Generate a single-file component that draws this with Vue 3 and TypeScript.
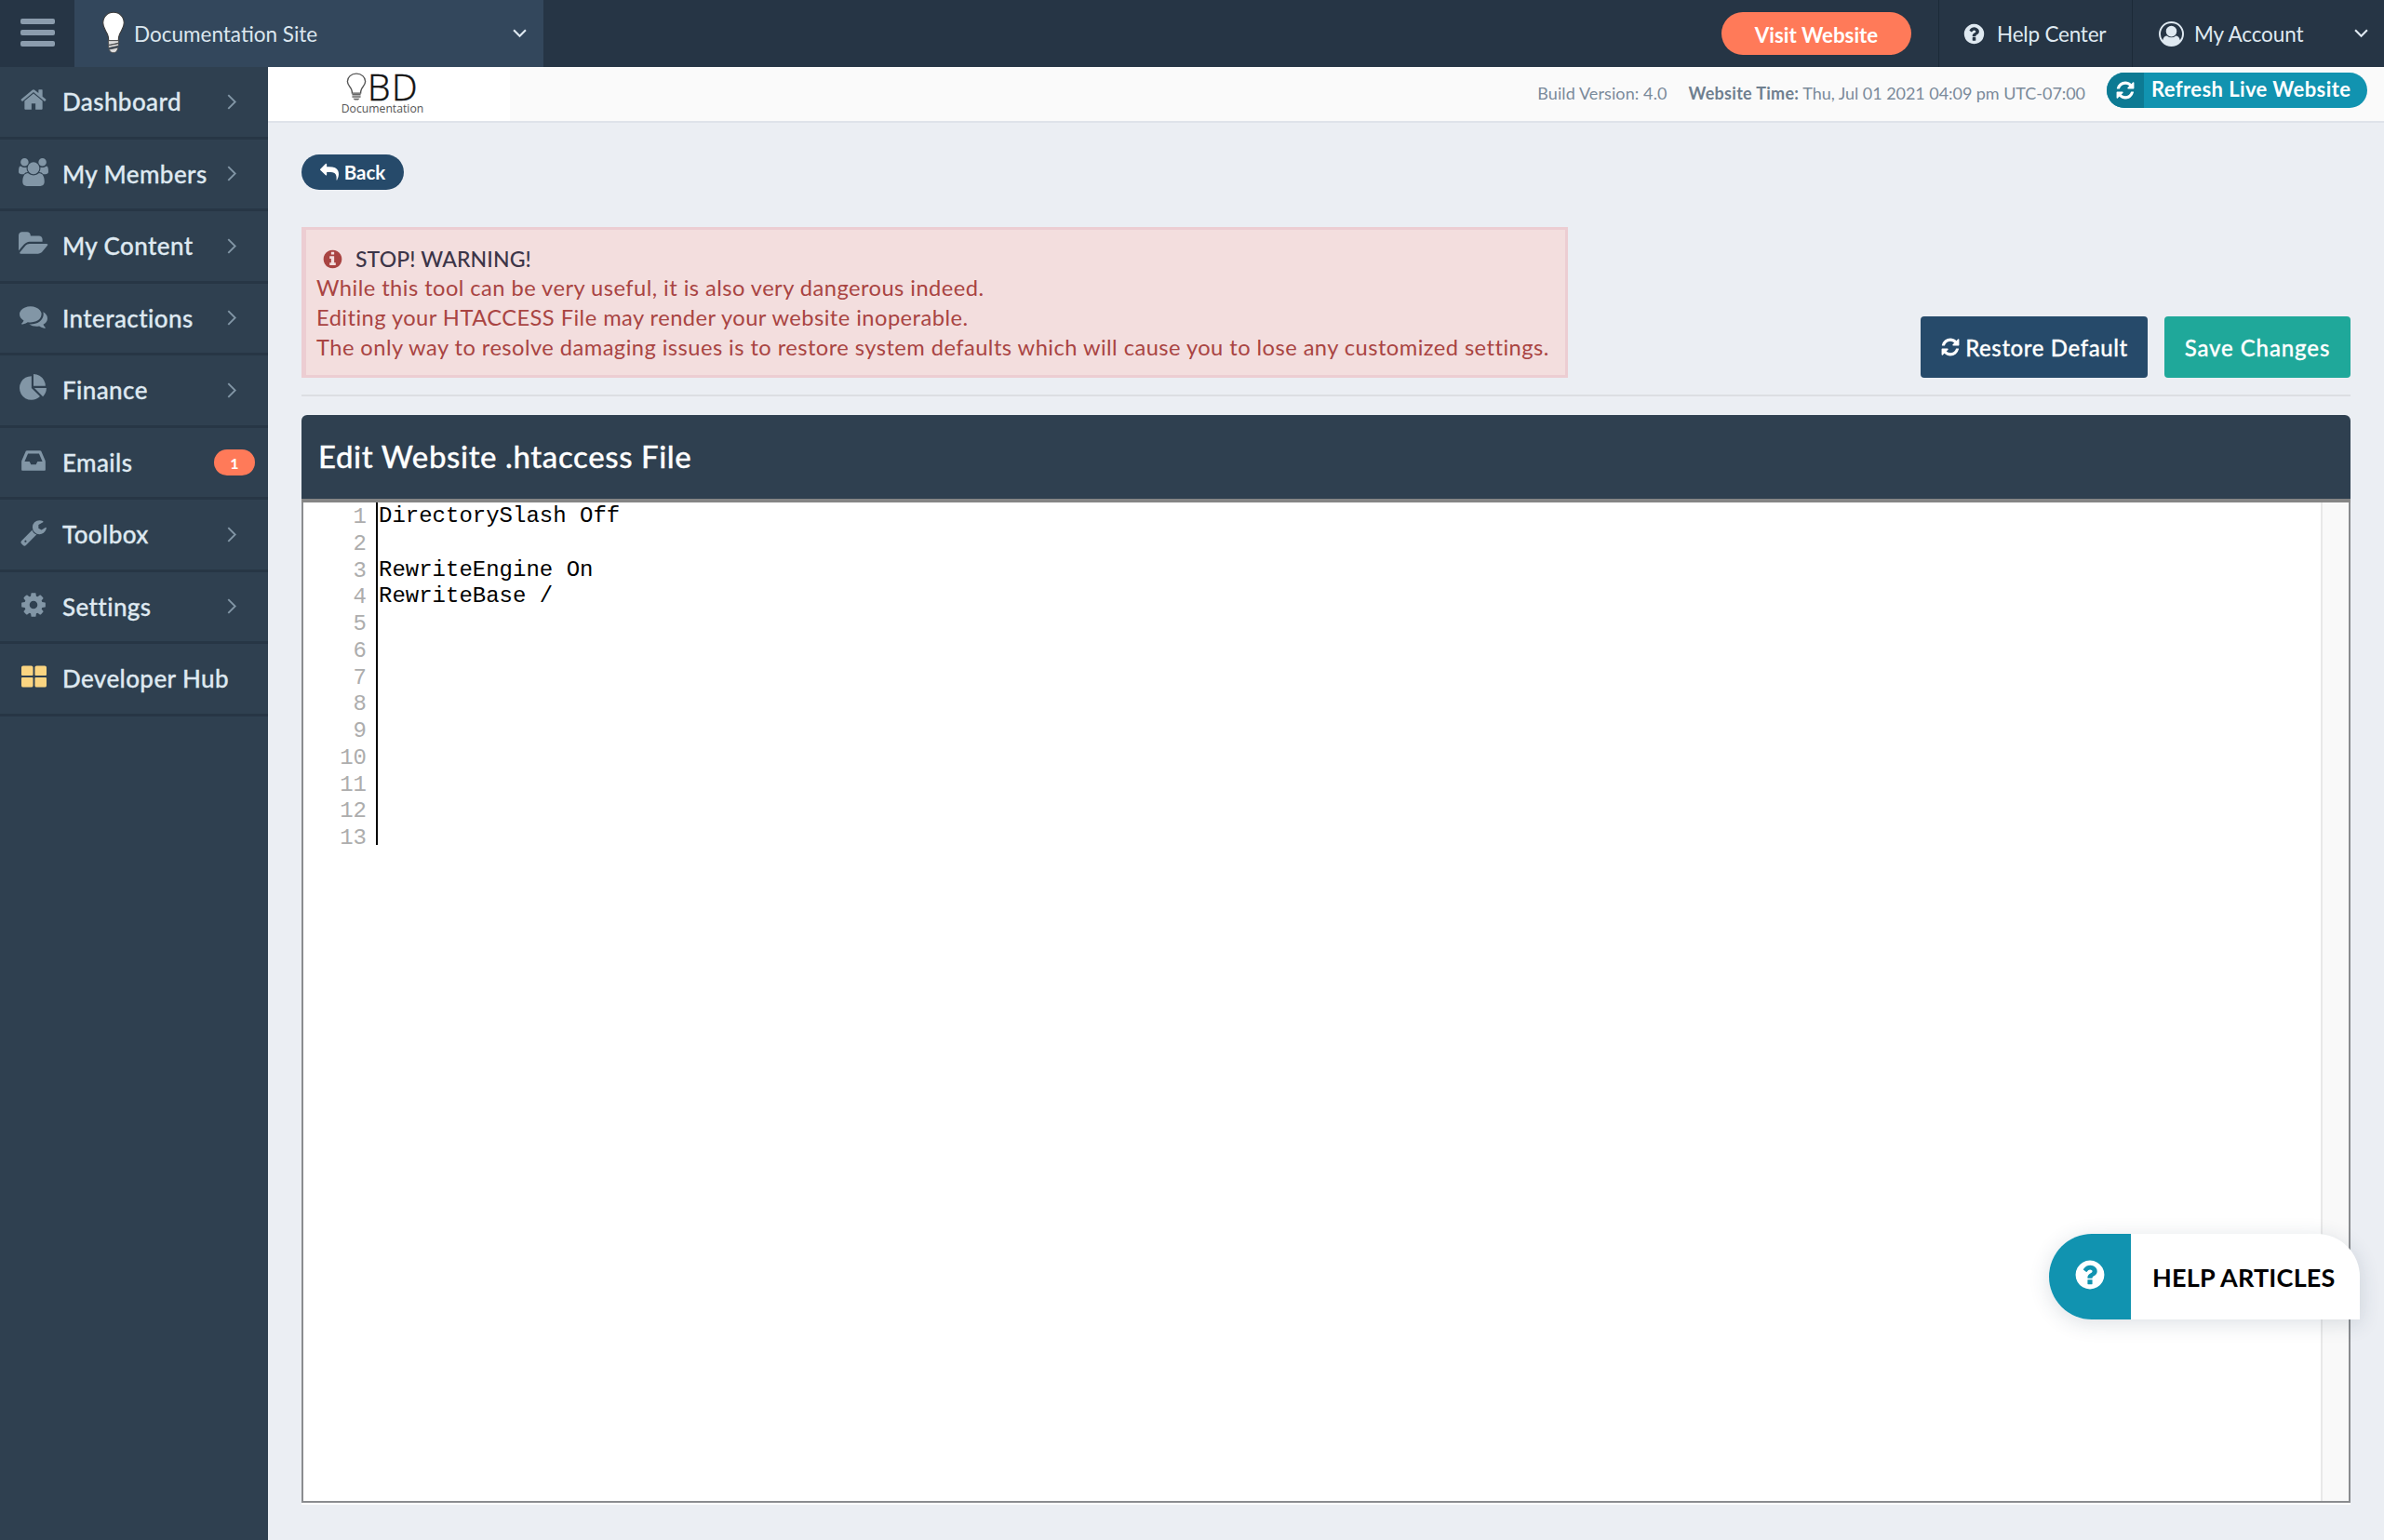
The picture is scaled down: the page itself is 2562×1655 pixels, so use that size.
<script setup lang="ts">
interface Icon { vb: string; d: string }
const icons: Record<string, Icon> = {
  home: { vb: '0 0 1792 1792', d: 'M1472 992v480q0 26-19 45t-45 19h-384v-384h-256v384h-384q-26 0-45-19t-19-45v-480q0-1 .5-3t.5-3l575-474 575 474q1 2 1 6zm223-69l-62 74q-8 9-21 11h-3q-13 0-21-7l-692-577-692 577q-12 8-24 7-13-2-21-11l-62-74q-8-10-7-23.5t11-21.5l719-599q32-26 76-26t76 26l244 204v-195q0-14 9-23t23-9h192q14 0 23 9t9 23v408l219 182q10 8 11 21.5t-7 23.5z' },
  users: { vb: '0 0 1920 1792', d: 'M593 896q-162 5-265 128h-134q-82 0-138-40.5t-56-118.5q0-353 124-353 6 0 43.5 21t97.5 42.5 119 21.5q67 0 133-23-5 37-5 66 0 139 81 256zm1071 637q0 120-73 189.5t-194 69.5h-874q-121 0-194-69.5t-73-189.5q0-53 3.5-103.5t14-109 26.5-108.5 43-97.5 62-81 85.5-53.5 111.5-20q10 0 43 21.5t73 48 107 48 135 21.5 135-21.5 107-48 73-48 43-21.5q61 0 111.5 20t85.5 53.5 62 81 43 97.5 26.5 108.5 14 109 3.5 103.5zm-1024-1277q0 106-75 181t-181 75-181-75-75-181 75-181 181-75 181 75 75 181zm704 384q0 159-112.5 271.5t-271.5 112.5-271.5-112.5-112.5-271.5 112.5-271.5 271.5-112.5 271.5 112.5 112.5 271.5zm576 225q0 78-56 118.5t-138 40.5h-134q-103-123-265-128 81-117 81-256 0-29-5-66 66 23 133 23 59 0 119-21.5t97.5-42.5 43.5-21q124 0 124 353zm-128-609q0 106-75 181t-181 75-181-75-75-181 75-181 181-75 181 75 75 181z' },
  folder: { vb: '0 0 1920 1792', d: 'M1879 952q0 31-31 66l-336 396q-43 51-120.5 86.5t-143.5 35.5h-1088q-34 0-60.5-13t-26.5-43q0-31 31-66l336-396q43-51 120.5-86.5t143.5-35.5h1088q34 0 60.5 13t26.5 43zm-343-344v160h-832q-94 0-197 47.5t-164 119.5l-337 396-5 6q0-4-.5-12.5t-.5-12.5v-960q0-92 66-158t158-66h320q92 0 158 66t66 158v32h544q92 0 158 66t66 158z' },
  comments: { vb: '0 0 1792 1792', d: 'M1408 768q0 139-94 257t-256.5 186.5-353.5 68.5q-86 0-176-16-124 88-278 128-36 9-86 16h-3q-11 0-20.5-8t-11.5-21q-1-3-1-6.5t.5-6.5 2-6l2.5-5 3.5-5.5 4-5 4.5-5 4-4.5q5-6 23-25t26-29.5 22.5-29 25-38.5 20.5-44q-124-72-195-177t-71-224q0-139 94-257t256.5-186.5 353.5-68.5 353.5 68.5 256.5 186.5 94 257zm384 256q0 120-71 224.5t-195 176.5q10 24 20.5 44t25 38.5 22.5 29 26 29.5 23 25q1 1 4 4.5t4.5 5 4 5 3.5 5.5l2.5 5 2 6 .5 6.5-1 6.5q-3 14-13 22t-22 7q-50-7-86-16-154-40-278-128-90 16-176 16-271 0-472-132 58 4 88 4 161 0 309-45t264-129q125-92 192-212t67-254q0-77-23-152 129 71 204 178t75 230z' },
  pie: { vb: '0 0 1792 1792', d: 'M768 890l546 546q-106 108-247.5 168t-298.5 60q-209 0-385.5-103t-279.5-279.5-103-385.5 103-385.5 279.5-279.5 385.5-103v762zm187 6h773q0 157-60 298.5t-168 247.5zm709-128h-768v-768q209 0 385.5 103t279.5 279.5 103 385.5z' },
  inbox: { vb: '0 0 1536 1792', d: 'M1023 960h316q-1-3-2.5-8.5t-2.5-7.5l-212-496h-708l-212 496q-1 3-2.5 8.5t-2.5 7.5h316l95 192h320zm513 30v482q0 26-19 45t-45 19h-1408q-26 0-45-19t-19-45v-482q0-62 25-123l238-552q10-25 36.5-42t52.5-17h832q26 0 52.5 17t36.5 42l238 552q25 61 25 123z' },
  wrench: { vb: '0 0 1792 1792', d: 'M448 1472q0-26-19-45t-45-19-45 19-19 45 19 45 45 19 45-19 19-45zm644-420l-682 682q-37 37-90 37-52 0-91-37l-106-108q-38-36-38-90 0-53 38-91l681-681q39 98 114.5 173.5t173.5 114.5zm634-435q0 39-23 106-47 134-164.5 217.5t-258.5 83.5q-185 0-316.5-131.5t-131.5-316.5 131.5-316.5 316.5-131.5q58 0 121.5 16.5t107.5 46.5q16 11 16 28t-16 28l-293 169v224l193 107q5-3 79-48.5t135.5-81 70.5-35.5q15 0 23.5 10t8.5 25z' },
  cog: { vb: '0 0 1792 1792', d: 'M1152 896q0-106-75-181t-181-75-181 75-75 181 75 181 181 75 181-75 75-181zm512-109v222q0 12-8 23t-20 13l-185 28q-19 54-39 91 35 50 107 138 10 12 10 25t-9 23q-27 37-99 108t-94 71q-12 0-26-9l-138-108q-44 23-91 38-16 136-29 186-7 28-36 28h-222q-14 0-24.5-8.5t-11.5-21.5l-28-184q-49-16-90-37l-141 107q-10 9-25 9-14 0-25-11-126-114-165-168-7-10-7-23 0-12 8-23 15-21 51-66.5t54-70.5q-27-50-41-99l-183-27q-13-2-21-12.5t-8-23.5v-222q0-12 8-23t19-13l186-28q14-46 39-92-40-57-107-138-10-12-10-24 0-10 9-23 26-36 98.5-107.5t94.5-71.5q13 0 26 10l138 107q44-23 91-38 16-136 29-186 7-28 36-28h222q14 0 24.5 8.5t11.5 21.5l28 184q49 16 90 37l142-107q9-9 24-9 13 0 25 10 129 119 165 170 7 8 7 22 0 12-8 23-15 21-51 66.5t-54 70.5q26 50 41 98l183 28q13 2 21 12.5t8 23.5z' },
  grid: { vb: '0 0 28 24', d: 'M2 0h9a2 2 0 0 1 2 2v8a1 1 0 0 1-1 1H1a1 1 0 0 1-1-1V2a2 2 0 0 1 2-2zM17 0h9a2 2 0 0 1 2 2v8a1 1 0 0 1-1 1H16a1 1 0 0 1-1-1V2a2 2 0 0 1 2-2zM1 13h11a1 1 0 0 1 1 1v8a2 2 0 0 1-2 2H2a2 2 0 0 1-2-2v-8a1 1 0 0 1 1-1zM16 13h11a1 1 0 0 1 1 1v8a2 2 0 0 1-2 2h-9a2 2 0 0 1-2-2v-8a1 1 0 0 1 1-1z' },
  info: { vb: '0 0 1792 1792', d: 'M1152 1376v-160q0-14-9-23t-23-9h-96v-512q0-14-9-23t-23-9h-320q-14 0-23 9t-9 23v160q0 14 9 23t23 9h96v320h-96q-14 0-23 9t-9 23v160q0 14 9 23t23 9h448q14 0 23-9t9-23zm-128-896v-160q0-14-9-23t-23-9h-192q-14 0-23 9t-9 23v160q0 14 9 23t23 9h192q14 0 23-9t9-23zm640 416q0 209-103 385.5t-279.5 279.5-385.5 103-385.5-103-279.5-279.5-103-385.5 103-385.5 279.5-279.5 385.5-103 385.5 103 279.5 279.5 103 385.5z' },
  question: { vb: '0 0 1792 1792', d: 'M1024 1376v-192q0-14-9-23t-23-9h-192q-14 0-23 9t-9 23v192q0 14 9 23t23 9h192q14 0 23-9t9-23zm256-672q0-88-55.5-163t-138.5-116-170-41q-243 0-371 213-15 24 8 42l132 100q7 6 19 6 16 0 25-12 53-68 86-92 34-24 86-24 48 0 85.5 26t37.5 59q0 38-20 61t-68 45q-63 28-115.5 86.5t-52.5 125.5v36q0 14 9 23t23 9h192q14 0 23-9t9-23q0-19 21.5-49.5t54.5-49.5q32-18 49-28.5t46-35 44.5-48 28-60.5 12.5-81zm384 192q0 209-103 385.5t-279.5 279.5-385.5 103-385.5-103-279.5-279.5-103-385.5 103-385.5 279.5-279.5 385.5-103 385.5 103 279.5 279.5 103 385.5z' },
  refresh: { vb: '0 0 1792 1792', d: 'M1639 1056q0 5-1 7-64 268-268 434.5t-478 166.5q-146 0-282.5-55t-243.5-157l-129 129q-19 19-45 19t-45-19-19-45v-448q0-26 19-45t45-19h448q26 0 45 19t19 45-19 45l-137 137q71 66 161 102t187 36q134 0 250-65t186-179q11-17 53-117 8-23 30-23h192q13 0 22.5 9.5t9.5 22.5zm25-800v448q0 26-19 45t-45 19h-448q-26 0-45-19t-19-45 19-45l138-138q-148-137-349-137-134 0-250 65t-186 179q-11 17-53 117-8 23-30 23h-199q-13 0-22.5-9.5t-9.5-22.5v-7q65-268 270-434.5t480-166.5q146 0 284 55.5t245 156.5l130-129q19-19 45-19t45 19 19 45z' },
  reply: { vb: '0 0 1792 1792', d: 'M1792 1120q0 166-127 451-3 7-10.5 24t-13.5 30-13 22q-12 17-28 17-15 0-23.5-10t-8.5-25q0-9 2.5-26.5t2.5-23.5q5-68 5-123 0-101-17.5-181t-48.5-138.5-80-101-105.5-69.5-133-42.5-154-21.5-175.5-6h-224v256q0 26-19 45t-45 19-45-19l-512-512q-19-19-19-45t19-45l512-512q19-19 45-19t45 19 19 45v256h224q713 0 875 403 53 134 53 333z' },
  account: { vb: '0 0 1792 1792', d: 'M896 0q182 0 348 71t286 191 191 286 71 348q0 181-70.5 347t-190.5 286-286 191.5-349 71.5-349-71-285.5-191.5-190.5-286-71-347.5 71-348 191-286 286-191 348-71zm619 1351q149-205 149-455 0-156-61-298t-164-245-245-164-298-61-298 61-245 164-164 245-61 298q0 250 149 455 66-327 306-327 131 128 313 128t313-128q240 0 306 327zm-235-647q0-159-112.5-271.5t-271.5-112.5-271.5 112.5-112.5 271.5 112.5 271.5 271.5 112.5 271.5-112.5 112.5-271.5z' }
}

interface NavItem { label: string; icon: string; w: number; badge?: string; chevron: boolean; accent?: boolean }
const nav: NavItem[] = [
  { label: 'Dashboard', icon: 'home', w: 30, chevron: true },
  { label: 'My Members', icon: 'users', w: 32, chevron: true },
  { label: 'My Content', icon: 'folder', w: 32, chevron: true },
  { label: 'Interactions', icon: 'comments', w: 30, chevron: true },
  { label: 'Finance', icon: 'pie', w: 30, chevron: true },
  { label: 'Emails', icon: 'inbox', w: 28, badge: '1', chevron: false },
  { label: 'Toolbox', icon: 'wrench', w: 30, chevron: true },
  { label: 'Settings', icon: 'cog', w: 30, chevron: true },
  { label: 'Developer Hub', icon: 'grid', w: 27, chevron: false, accent: true }
]
const lineNumbers: number[] = Array.from({ length: 13 }, (_, i) => i + 1)
const code = 'DirectorySlash Off\n\nRewriteEngine On\nRewriteBase /'
</script>

<template>
  <div class="app">
    <header class="topbar">
      <button class="burger" aria-label="Menu"><span></span><span></span><span></span></button>
      <div class="site">
        <svg class="bulb" viewBox="0 0 30 54">
          <path d="M15 2C7.500 2 2 7.500 2 15c0 6 3.500 9.500 5.500 14 1 2.500 1.500 5 1.500 8h12c0-3 .5-5.500 1.500-8C24.500 24.500 28 21 28 15 28 7.500 22.500 2 15 2z" fill="#fff" stroke="#3a3a3a" stroke-width="1.200" />
          <path d="M8.500 37h13l-.5 3-12 2.500zM8.500 43l13-2.500-.5 3-12 2.500zM9 48l12-2.500-1.500 3.500c-1 2-2.500 3-4.500 3s-4-1-5-3z" fill="#ddd" stroke="#444" stroke-width=".9" />
        </svg>
        <span class="site-name">Documentation Site</span>
        <svg class="chev-down" viewBox="0 0 14 9"><path d="M1 1l6 6 6-6" /></svg>
      </div>
      <div class="top-right">
        <a class="visit">Visit Website</a>
        <a class="top-link help-link">
          <svg class="top-ico" :viewBox="icons.question.vb"><path :d="icons.question.d" /></svg>
          Help Center
        </a>
        <a class="top-link account-link">
          <svg class="top-ico acc" :viewBox="icons.account.vb"><path :d="icons.account.d" /></svg>
          My Account
          <svg class="chev-down small" viewBox="0 0 14 9"><path d="M1 1l6 6 6-6" /></svg>
        </a>
      </div>
    </header>

    <div class="body">
      <aside class="sidebar">
        <a v-for="item in nav" :key="item.label" class="nav-row">
          <span class="nav-ico" :class="{ accent: item.accent }">
            <svg :viewBox="icons[item.icon].vb" :width="item.w" :height="item.icon === 'grid' ? 24 : 30"><path :d="icons[item.icon].d" /></svg>
          </span>
          <span class="nav-label">{{ item.label }}</span>
          <svg v-if="item.chevron" class="chev-right" viewBox="0 0 9 16"><path d="M1 1l7 7-7 7" /></svg>
          <span v-if="item.badge" class="badge">{{ item.badge }}</span>
        </a>
      </aside>

      <main class="main">
        <div class="subbar">
          <div class="logo">
            <div class="logo-mark">
              <svg class="logo-bulb" viewBox="0 0 24 38" preserveAspectRatio="none">
                <path d="M12 1.500C6 1.500 1.500 6 1.500 12c0 4.500 3 7 4.500 10.500.8 2 1 3.500 1 5.500h10c0-2 .2-3.500 1-5.500C19.500 19 22.500 16.500 22.500 12 22.500 6 18 1.500 12 1.500z" fill="#fff" stroke="#555" stroke-width="1.500" />
                <path d="M7 29h10v2H7zM7 32h10v2H7zM8 35h8l-2 2.500h-4z" fill="#666" />
              </svg>
              <span class="logo-bd">BD</span>
            </div>
            <span class="logo-doc">Documentation</span>
          </div>
          <div class="sub-info">
            <span class="build">Build Version: 4.0</span>
            <span class="time"><b>Website Time:</b> Thu, Jul 01 2021 04:09 pm UTC-07:00</span>
            <a class="refresh-live">
              <span class="refresh-ico"><svg :viewBox="icons.refresh.vb"><path :d="icons.refresh.d" /></svg></span>
              <span class="refresh-text">Refresh Live Website</span>
            </a>
          </div>
        </div>

        <div class="content">
          <a class="back">
            <svg :viewBox="icons.reply.vb"><path :d="icons.reply.d" /></svg>
            Back
          </a>

          <div class="action-row">
            <div class="alert">
              <div class="alert-title">
                <svg :viewBox="icons.info.vb"><path :d="icons.info.d" /></svg>
                <span>STOP! WARNING!</span>
              </div>
              <div>While this tool can be very useful, it is also very dangerous indeed.</div>
              <div>Editing your HTACCESS File may render your website inoperable.</div>
              <div>The only way to resolve damaging issues is to restore system defaults which will cause you to lose any customized settings.</div>
            </div>
            <div class="actions">
              <button class="btn restore">
                <svg :viewBox="icons.refresh.vb"><path :d="icons.refresh.d" /></svg>
                Restore Default
              </button>
              <button class="btn save">Save Changes</button>
            </div>
          </div>

          <hr class="divider" />

          <section class="panel">
            <h2 class="panel-head">Edit Website .htaccess File</h2>
            <div class="editor">
              <div class="editor-lines">
                <div class="gutter">
                  <div v-for="n in lineNumbers" :key="n">{{ n }}</div>
                </div>
                <pre class="code">{{ code }}</pre>
              </div>
              <div class="strip"></div>
            </div>
          </section>
        </div>
      </main>
    </div>

    <a class="help-articles">
      <span class="help-ico"><svg :viewBox="icons.question.vb"><path :d="icons.question.d" /></svg></span>
      <span class="help-text">HELP ARTICLES</span>
    </a>
  </div>
</template>

<style>
html, body { margin: 0; background: #ebeef3; }
</style>

<style scoped>
.app {
  position: relative;
  width: 2562px;
  height: 1655px;
  overflow: hidden;
  display: flex;
  flex-direction: column;
  font-family: Lato, "Open Sans", sans-serif;
  background: #ebeef3;
}
a { text-decoration: none; }
svg { fill: currentColor; display: block; }

.topbar { height: 72px; flex: none; display: flex; background: #263545; color: #dfe9f1; }
.burger {
  width: 80px; border: 0; padding: 0 0 2px; background: #263545;
  display: flex; flex-direction: column; gap: 6px; align-items: center; justify-content: center;
}
.burger span { width: 37px; height: 6px; border-radius: 2px; background: #8b9cad; }
.site {
  width: 504px; display: flex; align-items: center; background: #33475c;
  padding-left: 29px; padding-right: 18px; box-sizing: border-box;
}
.bulb { width: 26px; height: 50px; margin-top: -2px; }
.site-name { margin-left: 9px; font-size: 22.500px; color: #dbe6ee; }
.chev-down { width: 15px; height: 10px; margin-left: auto; fill: none; stroke: #dfe9f1; stroke-width: 2; }
.top-right { margin-left: auto; display: flex; align-items: center; height: 100%; }
.visit {
  width: 204px; height: 46px; border-radius: 23px; background: #ff7a59; color: #fff;
  font-size: 22.300px; font-weight: 700; display: flex; align-items: center; justify-content: center;
  margin-right: 29px; padding-top: 2px; box-sizing: border-box;
}
.top-link {
  height: 100%; display: flex; align-items: center; box-sizing: border-box;
  border-left: 1px solid #1c2a38; font-size: 22.500px; color: #dfe9f1;
}
.help-link { width: 208px; padding-left: 25px; gap: 12px; letter-spacing: -.2px; }
.account-link { width: 271px; padding-left: 28px; gap: 11px; letter-spacing: -.1px; }
.top-ico { width: 25px; height: 25px; }
.top-ico.acc { width: 27px; height: 27px; }
.chev-down.small { margin-left: auto; margin-right: 17px; width: 15px; }

.body { flex: 1; display: flex; min-height: 0; }
.sidebar { width: 288px; flex: none; background: #2f4050; }
.nav-row {
  height: 77.500px; box-sizing: border-box; border-bottom: 3px solid #273645;
  display: flex; align-items: center; padding-right: 14px; color: #dfe9f1;
}
.nav-ico { width: 36px; margin-left: 18px; margin-right: 13px; display: flex; justify-content: center; color: #8296a6; margin-top: -4px; }
.nav-ico.accent { color: #fbd581; }
.nav-label { font-size: 26px; font-weight: 500; letter-spacing: .4px; -webkit-text-stroke: .3px currentColor; }
.chev-right { width: 10px; height: 17px; margin-left: auto; margin-right: 20px; fill: none; stroke: #8296a6; stroke-width: 1.800; }
.badge {
  margin-left: auto; width: 44px; height: 28px; border-radius: 14px; background: #ff7a59; color: #fff; margin-top: 1px;
  font-size: 16px; font-weight: 700; display: flex; align-items: center; justify-content: center;
}

.main { flex: 1; min-width: 0; display: flex; flex-direction: column; }
.subbar {
  height: 60px; flex: none; box-sizing: border-box; display: flex; background: #fafafa;
  border-bottom: 2px solid #dfe3ea;
}
.logo { width: 260px; box-sizing: border-box; background: #fff; display: flex; flex-direction: column; align-items: center; padding-right: 14px; color: #222; }
.logo-mark { display: flex; align-items: flex-end; height: 30px; margin-top: 6px; }
.logo-bulb { width: 22px; height: 30px; }
.logo-bd { font-family: "Open Sans", sans-serif; font-weight: 300; font-size: 39px; line-height: 30px; letter-spacing: 1.500px; margin-left: 1px; color: #111; -webkit-text-stroke: .5px #111; }
.logo-doc { font-family: "Open Sans", sans-serif; font-size: 12.200px; line-height: 12px; color: #555; margin-top: 3px; }
.sub-info { margin-left: auto; display: flex; align-items: center; padding-right: 18px; }
.build { font-size: 18px; color: #7b8a9a; letter-spacing: .1px; margin-top: -2px; }
.time { font-size: 18px; color: #7b8a9a; margin-left: 23px; margin-top: -2px; letter-spacing: -.05px; }
.time b { font-weight: 700; color: #6f7f8f; letter-spacing: .3px; }
.refresh-live {
  margin-left: 23px; margin-top: -8px; width: 280px; height: 38px; border-radius: 19px; overflow: hidden;
  background: #1193b0; color: #fff; display: flex; align-items: center;
}
.refresh-ico { width: 40px; height: 100%; background: #0d7a93; display: flex; align-items: center; justify-content: center; }
.refresh-ico svg { width: 22px; height: 22px; }
.refresh-text { margin-left: 8px; padding-bottom: 3px; font-size: 22px; font-weight: 700; letter-spacing: .4px; }

.content { flex: 1; min-height: 0; padding: 34px 36px 40px; display: flex; flex-direction: column; }
.back {
  width: 110px; height: 38px; border-radius: 19px; background: #264a6a; color: #fff; flex: none;
  display: flex; align-items: center; justify-content: center; gap: 6px; font-size: 20.500px; font-weight: 700; box-sizing: border-box;
}
.back svg { width: 20px; height: 20px; }
.action-row { margin-top: 40px; display: flex; align-items: flex-end; justify-content: space-between; flex: none; }
.alert {
  width: 1361px; height: 162px; box-sizing: border-box; background: #f3dede; border: 3px solid #eccdd2; border-left-width: 5px;
  padding: 14px 0 0 11px; color: #a94442; font-size: 23.700px; line-height: 32px; letter-spacing: .45px;
}
.alert-title { display: flex; align-items: center; color: #3c3548; font-weight: 500; font-size: 23px; letter-spacing: .1px; padding-top: 1px; margin-bottom: -1px; }
.alert-title svg { width: 23px; height: 23px; color: #a94442; margin: 0 13px 0 6px; }
.actions { display: flex; gap: 18px; }
.btn {
  height: 66px; border: 0; border-radius: 4px; color: #fff; font-family: inherit; font-size: 24px; font-weight: 500;
  display: flex; align-items: center; justify-content: center; padding: 0; -webkit-text-stroke: .3px currentColor;
}
.btn svg { width: 22px; height: 22px; margin-right: 5px; }
.restore { width: 244px; background: #264a6a; letter-spacing: .6px; }
.save { width: 200px; background: #1fa89a; letter-spacing: .9px; }
.divider { width: 100%; height: 2px; border: 0; background: #dcdee2; margin: 18px 0 20px; flex: none; }
.panel { flex: 1; min-height: 0; display: flex; flex-direction: column; }
.panel-head {
  margin: 0; height: 94px; flex: none; box-sizing: border-box; border-radius: 6px 6px 0 0;
  background: #2f4050; border-bottom: 4px solid #858585; color: #fff; font-size: 33px; font-weight: 500;
  display: flex; align-items: center; padding: 0 0 2px 18px; letter-spacing: .6px; -webkit-text-stroke: .3px currentColor;
}
.editor {
  flex: 1; min-height: 0; background: #fff; border: 2px solid #8a8c8f; border-top: 0;
  display: flex; justify-content: space-between; box-shadow: 0 2px 0 #fff;
}
.editor-lines { display: flex; height: 368px; }
.gutter {
  width: 78px; box-sizing: border-box; padding: 2px 10px 0 0; text-align: right; color: #adadad;
  font: 24px/28.750px "Liberation Mono", monospace; flex: none;
}
.code {
  margin: 0; padding: 1px 0 0 1px; border-left: 2px solid #000; color: #000;
  font: 24px/28.750px "Liberation Mono", monospace; 
}
.strip { width: 30px; box-sizing: border-box; background: #f9f9f9; border-left: 2px solid #e8e8e8; }

.help-articles {
  position: absolute; left: 2202px; top: 1326px; width: 334px; height: 92px; display: flex; overflow: hidden;
  border-radius: 46px 46px 0 46px; background: #fff; box-shadow: 0 4px 22px rgba(40, 60, 90, .16);
}
.help-ico { width: 88px; background: #1193b0; display: flex; align-items: center; justify-content: center; color: #fff; }
.help-ico svg { width: 36px; height: 36px; margin-top: -4px; }
.help-text { flex: 1; display: flex; align-items: center; padding-left: 23px; color: #000; font-size: 27px; font-weight: 700; letter-spacing: .2px; }
</style>
